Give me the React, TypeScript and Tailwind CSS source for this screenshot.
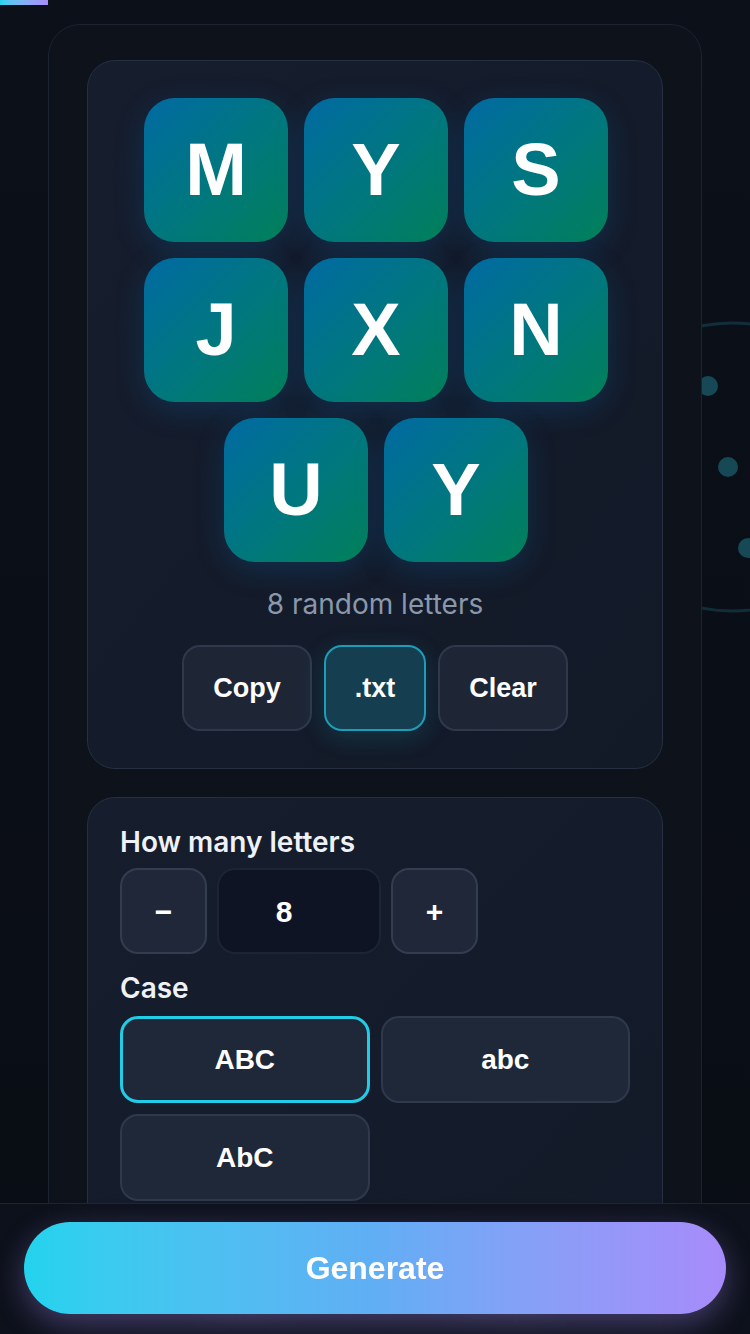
import React from "react";

const letters = ["M", "Y", "S", "J", "X", "N", "U", "Y"];

const btnFont = { fontFamily: '"Liberation Sans", Arial, sans-serif' } as const;

export default function App() {
  return (
    <div
      className="relative min-h-screen overflow-hidden bg-[#0a0d15] bg-gradient-to-b from-[#0b1019] to-[#090c13]"
      style={{ fontFamily: 'Inter, "Noto Sans", sans-serif' }}
    >
      {/* top progress bar */}
      <div className="absolute left-0 top-0 z-20 h-[5px] w-[48px] bg-gradient-to-r from-[#22d3ee] to-[#a78bfa]" />

      {/* decorative ring */}
      <svg
        className="pointer-events-none absolute left-[560px] top-[300px] z-0"
        width="320"
        height="340"
        viewBox="0 0 320 340"
      >
        <ellipse cx="172" cy="167" rx="150" ry="144" fill="none" stroke="#1b5566" strokeOpacity="0.45" strokeWidth="3" />
        <circle cx="148" cy="86" r="10" fill="#164855" />
        <circle cx="168" cy="167" r="10" fill="#164855" />
        <circle cx="188" cy="248" r="10" fill="#164855" />
      </svg>

      <main className="relative z-10 px-[48px] pt-[24px]">
        <div className="min-h-[1330px] rounded-[32px] border border-[#1c2331] bg-[#0d121b] px-[38px] pb-[160px] pt-[35px]">
          {/* result card */}
          <section className="rounded-[28px] border border-[#263042] bg-gradient-to-br from-[#161d2d] to-[#121927] pb-[37px] pt-[37px]">
            <div className="mx-auto flex w-[466px] flex-wrap justify-center gap-4 pl-[2px]">
              {letters.map((l, i) => (
                <div
                  key={i}
                  className="flex h-[144px] w-[144px] items-center justify-center rounded-[31px] bg-gradient-to-br from-[#036aa3] to-[#058058] shadow-[0_8px_30px_rgba(14,120,200,0.22)]"
                >
                  <span
                    className="text-[74px] font-bold leading-none text-white"
                    style={btnFont}
                  >
                    {l}
                  </span>
                </div>
              ))}
            </div>
            <p className="mt-[23px] text-center text-[28px] leading-[38px] text-[#8a98ac]">
              8 random letters
            </p>
            <div className="mt-[22px] flex justify-center gap-3" style={btnFont}>
              <button className="h-[86px] w-[130px] rounded-[18px] border-2 border-[#2f394b] bg-[#1e2636] text-[27px] font-bold text-white">
                Copy
              </button>
              <button className="h-[86px] w-[102px] rounded-[18px] border-2 border-[#1f9cb8] bg-[#153f50] text-[27px] font-bold text-white shadow-[0_6px_26px_rgba(34,211,238,0.16)]">
                .txt
              </button>
              <button className="h-[86px] w-[130px] rounded-[18px] border-2 border-[#2f394b] bg-[#1e2636] text-[27px] font-bold text-white">
                Clear
              </button>
            </div>
          </section>

          {/* settings card */}
          <section className="mt-[28px] rounded-[28px] border border-[#263042] bg-gradient-to-br from-[#161d2d] to-[#121927] px-[32px] pb-[40px] pt-[26px]">
            <div className="text-[28px] font-semibold leading-[36px] text-[#eef2f7]">How many letters</div>
            <div className="mt-[8px] flex gap-[10px]" style={btnFont}>
              <button className="flex h-[86px] w-[87px] items-center justify-center rounded-[18px] border-2 border-[#333d50] bg-[#1f2738] text-[30px] font-bold text-white">
                −
              </button>
              <div className="flex h-[86px] w-[164px] items-center justify-center rounded-[18px] border-2 border-[#1d2535] bg-[#0e1424] pr-[30px] text-[30px] font-bold text-white">
                8
              </div>
              <button className="flex h-[86px] w-[87px] items-center justify-center rounded-[18px] border-2 border-[#333d50] bg-[#1f2738] text-[30px] font-bold text-white">
                +
              </button>
            </div>

            <div className="mt-[16px] text-[28px] font-semibold leading-[36px] text-[#eef2f7]">Case</div>
            <div className="mt-[10px] grid grid-cols-2 gap-[11px]" style={btnFont}>
              <button className="h-[87px] rounded-[18px] border-[3px] border-[#22cce6] bg-[#1f2839] text-[28px] font-bold text-white">
                ABC
              </button>
              <button className="h-[87px] rounded-[18px] border-2 border-[#2f394b] bg-[#1f2839] text-[28px] font-bold text-white">
                abc
              </button>
              <button className="h-[87px] rounded-[18px] border-2 border-[#2f394b] bg-[#1f2839] text-[28px] font-bold text-white">
                AbC
              </button>
            </div>

            <div className="mt-[16px] text-[28px] font-semibold leading-[36px] text-[#eef2f7]">Repeats</div>
            <div className="mt-[11px] grid grid-cols-2 gap-[11px]" style={btnFont}>
              <button className="h-[87px] rounded-[18px] border-2 border-[#2f394b] bg-[#1f2839] text-[28px] font-bold text-white">
                Allow
              </button>
              <button className="h-[87px] rounded-[18px] border-2 border-[#2f394b] bg-[#1f2839] text-[28px] font-bold text-white">
                Unique
              </button>
            </div>
          </section>
        </div>
      </main>

      {/* bottom action bar */}
      <div className="fixed bottom-0 left-0 right-0 z-30 h-[131px] border-t border-[#1e2431] bg-[#0e121b]/95 px-6 pt-[18px] backdrop-blur-md">
        <button
          className="h-[92px] w-full rounded-full bg-gradient-to-r from-[#22d3ee] via-[#60aef4] to-[#a78bfa] text-[32px] font-bold text-white shadow-[0_10px_30px_rgba(167,139,250,0.35)]"
          style={btnFont}
        >
          Generate
        </button>
      </div>
    </div>
  );
}
